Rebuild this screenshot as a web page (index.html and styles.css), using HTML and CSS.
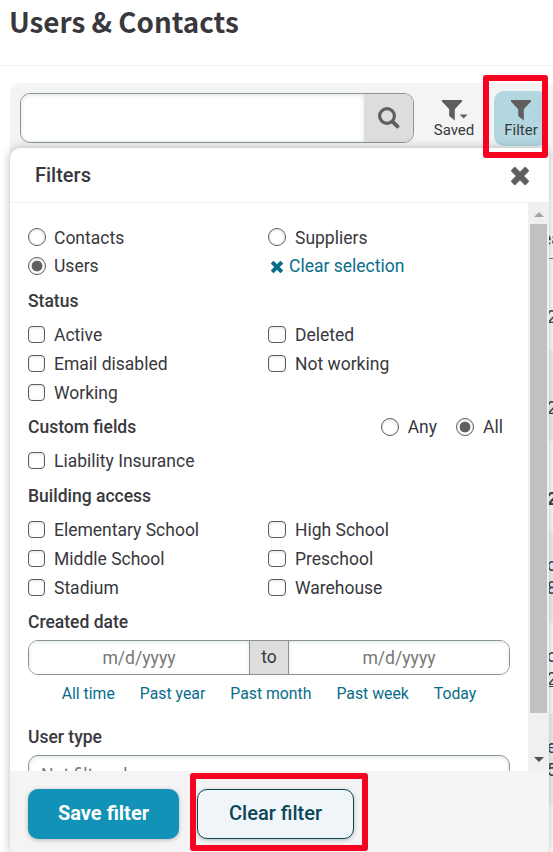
FILE: index.html
```
<!DOCTYPE html>
<html lang="en">
<head>
<meta charset="UTF-8">
<meta name="viewport" content="width=device-width,initial-scale=1.0">
<title>Users &amp; Contacts</title>
<link rel="stylesheet" href="styles.css">
</head>
<body>
<div class="page">
	<header class="page-head">
		<h1>Users &amp; Contacts</h1>
	</header>

	<div class="toolbar">
		<div class="search">
			<input type="text" class="search-input" aria-label="Search">
			<button class="search-btn" aria-label="Search">
				<svg width="22" height="22" viewBox="0 0 22 22"><circle cx="9" cy="9" r="7.4" fill="none" stroke="#5f5f5f" stroke-width="3.2"/><path d="M14.6 14.6l4.8 4.8" stroke="#5f5f5f" stroke-width="3.8" stroke-linecap="round"/></svg>
			</button>
		</div>
		<button class="tool tool-saved">
			<svg width="26" height="21" viewBox="0 0 26 21"><path d="M0 0h20v1.6l-7.2 7.6V20.4L7.2 16V9.2L0 1.6z" fill="#5f5f5f"/><path d="M17.6 14.4h8l-4 4z" fill="#5f5f5f"/></svg>
			<span>Saved</span>
		</button>
		<button class="tool tool-filter">
			<svg width="20" height="21" viewBox="0 0 20 21"><path d="M0 0h20v1.6l-7.2 7.6V20.4L7.2 16V9.2L0 1.6z" fill="#5f5f5f"/></svg>
			<span>Filter</span>
		</button>
	</div>

	<div class="results">
		<div class="result-head">ea</div>
		<div class="result-row"><span>2</span></div>
		<div class="result-row"><span>2</span></div>
		<div class="result-row"><b>2</b></div>
		<div class="result-row"><span>o</span><span>8</span></div>
		<div class="result-row"><span>o</span><u>2</u></div>
		<div class="result-row"><span>e</span><span>5</span></div>
		<div class="result-row"></div>
	</div>

	<!-- filter dropdown -->
	<div class="panel">
		<div class="panel-head">
			<h2>Filters</h2>
			<button class="close" aria-label="Close">
				<svg width="18" height="18" viewBox="0 0 18 18"><g fill="#5f5f5f"><rect x="-1.4" y="6" width="20.8" height="6" rx="1.2" transform="rotate(45 9 9)"/><rect x="-1.4" y="6" width="20.8" height="6" rx="1.2" transform="rotate(-45 9 9)"/></g></svg>
			</button>
		</div>

		<div class="panel-body">
			<div class="fields">
				<div class="options">
					<label><input type="radio" name="kind">Contacts</label>
					<label><input type="radio" name="kind">Suppliers</label>
					<label><input type="radio" name="kind" checked>Users</label>
					<a class="clear-link"><svg width="12" height="12" viewBox="0 0 18 18"><g fill="#086d8b"><rect x="-1.4" y="6" width="20.8" height="6" rx="1.2" transform="rotate(45 9 9)"/><rect x="-1.4" y="6" width="20.8" height="6" rx="1.2" transform="rotate(-45 9 9)"/></g></svg>Clear selection</a>
				</div>

				<h3>Status</h3>
				<div class="options">
					<label><input type="checkbox">Active</label>
					<label><input type="checkbox">Deleted</label>
					<label><input type="checkbox">Email disabled</label>
					<label><input type="checkbox">Not working</label>
					<label><input type="checkbox">Working</label>
				</div>

				<div class="head-row">
					<h3>Custom fields</h3>
					<div class="match">
						<label><input type="radio" name="match">Any</label>
						<label><input type="radio" name="match" checked>All</label>
					</div>
				</div>
				<div class="options">
					<label><input type="checkbox">Liability Insurance</label>
				</div>

				<h3>Building access</h3>
				<div class="options">
					<label><input type="checkbox">Elementary School</label>
					<label><input type="checkbox">High School</label>
					<label><input type="checkbox">Middle School</label>
					<label><input type="checkbox">Preschool</label>
					<label><input type="checkbox">Stadium</label>
					<label><input type="checkbox">Warehouse</label>
				</div>

				<h3 class="h-date">Created date</h3>
				<div class="range">
					<input type="text" placeholder="m/d/yyyy">
					<span>to</span>
					<input type="text" placeholder="m/d/yyyy">
				</div>
				<div class="presets">
					<a>All time</a>
					<a>Past year</a>
					<a>Past month</a>
					<a>Past week</a>
					<a>Today</a>
				</div>

				<h3 class="h-type">User type</h3>
				<div class="select">Not filtered</div>
			</div>
			<div class="scrollbar">
				<i class="arrow-up"></i>
				<i class="thumb"></i>
				<i class="arrow-down"></i>
			</div>
		</div>

		<div class="panel-foot">
			<button class="btn btn-save">Save filter</button>
			<button class="btn btn-clear">Clear filter</button>
		</div>
	</div>

	<div class="mark mark-filter"></div>
	<div class="mark mark-clear"></div>
</div>
</body>
</html>
```
FILE: styles.css
```
*{box-sizing:border-box;}
html,body,h1,h2,h3{margin:0;padding:0;}
body{
	width:553px;
	height:852px;
	overflow:hidden;
	background:#fff;
	color:#38383d;
	font:17.5px/1.2 Roboto,"Liberation Sans",sans-serif;
}
button,input{font-family:inherit;color:inherit;margin:0;padding:0;border:0;}
button{display:flex;align-items:center;justify-content:center;}
svg{display:block;}

.page{
	position:relative;
	height:852px;
	overflow:hidden;
}
.page-head{
	height:66px;
	border-bottom:1px solid #f0f0f0;
	padding-left:9px;
}
.page-head h1{
	font:bold 27.8px/43px "Noto Sans CJK SC","Noto Sans",sans-serif;
	white-space:nowrap;
}

/* toolbar */
.toolbar{
	display:flex;
	height:76px;
	margin:17px 0 0 10px;
	padding:10px 0 0 10px;
	background:#f4f4f4;
	border-radius:10px 0 0 0;
}
.search{
	display:flex;
	width:394px;
	height:50px;
	border:1px solid #8a9496;
	border-radius:10px;
	overflow:hidden;
}
.search-input{
	flex:1;
	min-width:0;
	background:#fff;
	border-radius:9px 0 0 9px;
	box-shadow:inset 0 1px 5px #dfe6e8;
}
.search-btn{width:49px;background:#ddd;}
.tool{
	flex-direction:column;
	justify-content:flex-start;
	height:55px;
	margin-top:-2px;
	padding-top:9px;
	background:none;
	font-size:15px;
	line-height:18px;
}
.tool-saved{width:60px;margin-left:10px;}
.tool-saved svg{margin-left:2px;}
.tool-filter{
	width:54px;
	margin-left:10px;
	background:#b2d7e0;
	border-radius:10px;
}

/* table under the dropdown */
.results{
	padding-left:547px;
	margin-top:68px;
	line-height:23px;
	white-space:nowrap;
}
.result-head{
	height:32px;
	margin-left:-5px;
	padding-top:1px;
	border-bottom:1px solid #77777b;
}
.result-row{
	display:flex;
	flex-direction:column;
	justify-content:center;
	height:91px;
	padding-top:26px;
}
.result-row:nth-child(odd){background:#f1f3f5;}
.result-row span,.result-row b,.result-row u{height:23px;}
.result-row:nth-child(n+5){padding:0 0 2px;}

/* dropdown */
.panel{
	position:absolute;
	left:10px;
	top:148px;
	width:539px;
	height:708px;
	display:flex;
	flex-direction:column;
	background:#fff;
	border-radius:10px;
	box-shadow:0 0 10px rgba(60,85,90,.4);
	overflow:hidden;
}
.panel-head{
	flex:none;
	display:flex;
	align-items:center;
	justify-content:space-between;
	height:55px;
	padding:0 20px 0 25px;
	border-bottom:1px solid #f0f0f0;
}
.panel-head h2{font-size:20px;font-weight:500;}
.close{background:none;padding-top:2px;}
.panel-body{
	flex:none;
	display:flex;
	height:568px;
	overflow:hidden;
}
.fields{
	flex:1;
	min-width:0;
	padding:20.2px 18px 0;
}
.fields h3{
	height:40.3px;
	font-size:17.5px;
	line-height:40px;
	font-weight:500;
}
.options{
	display:grid;
	grid-template-columns:240px 1fr;
	grid-auto-rows:28.67px;
}
.options label,.clear-link,.match label{
	display:flex;
	align-items:center;
	padding-top:1.2px;
}
input[type="checkbox"],input[type="radio"]{
	appearance:none;
	flex:none;
	width:17px;
	height:17px;
	margin:0 9px 2px 0;
	border:1px solid #5c5c5f;
	border-radius:4px;
	background:#fff;
	box-shadow:inset 0 1px 3px #dfe3e4;
}
.options label:nth-child(even) input{width:18px;}
input[type="radio"]{
	width:18px;
	height:18px;
	margin-right:8px;
	border-radius:50%;
}
.options label:nth-child(even) input[type="radio"]{margin-right:9px;}
input[type="radio"]:checked{
	background:radial-gradient(circle,#5f5f5f 5px,#fff 5.8px);
}
.clear-link{color:#086d8b;padding-left:3px;gap:6px;}
.head-row{
	display:flex;
	justify-content:space-between;
}
.match{display:flex;gap:19px;padding-right:7px;}
.match input[type="radio"]{margin-right:9px;}
.fields .h-date{height:37.8px;}
.range{
	display:flex;
	height:35px;
	border:1px solid #8a9496;
	border-radius:10px;
	overflow:hidden;
}
.range input{
	flex:1;
	min-width:0;
	padding-top:1px;
	font-size:17.6px;
	text-align:center;
	background:#fff;
	box-shadow:inset 0 1px 4px #dfe6e8;
}
.range input::placeholder{color:#777;opacity:1;}
.range span{
	width:40px;
	line-height:32px;
	text-align:center;
	background:#ddd;
	border:solid #8a9496;
	border-width:0 1px;
}
.presets{
	display:flex;
	justify-content:center;
	gap:25px;
	height:41px;
	line-height:37px;
	font-size:15.8px;
	color:#086d8b;
}
.fields .h-type{height:39px;line-height:42px;}
.select{
	height:36px;
	padding-left:12px;
	border:1px solid #8a9496;
	border-radius:10px;
	line-height:38px;
	color:#777;
	box-shadow:inset 0 1px 4px #dfe6e8;
}

.scrollbar{
	flex:none;
	display:flex;
	flex-direction:column;
	align-items:center;
	width:21px;
	padding:9px 2px 0;
	background:#f0f0f0;
}
.arrow-up,.arrow-down{
	border:5px solid transparent;
	border-top-width:0;
	border-bottom-color:#a3a3a3;
}
.thumb{
	width:17px;
	height:489px;
	margin-top:7px;
	background:#c1c1c1;
}
.arrow-down{
	margin-top:44px;
	border-width:5px 5px 0;
	border-color:#505050 transparent transparent;
}

.panel-foot{
	flex:1;
	display:flex;
	gap:18px;
	padding:18px;
	background:#f4f4f4;
}
.btn{
	height:50px;
	padding-bottom:2px;
	border-radius:10px;
	font-size:20px;
	font-weight:500;
	box-shadow:0 1px 4px rgba(0,0,0,.25);
}
.btn-save{width:151px;background:#1192b6;color:#fff;font-weight:bold;}
.btn-clear{width:157px;background:#eff5f8;color:#0b4658;border:1px solid #0b4658;}

/* highlight frames */
.mark{
	position:absolute;
	border:6px solid #f60322;
	border-radius:3px;
}
.mark-filter{left:483px;top:75px;width:65px;height:83px;}
.mark-clear{left:190px;top:773px;width:178px;height:78px;}
```
